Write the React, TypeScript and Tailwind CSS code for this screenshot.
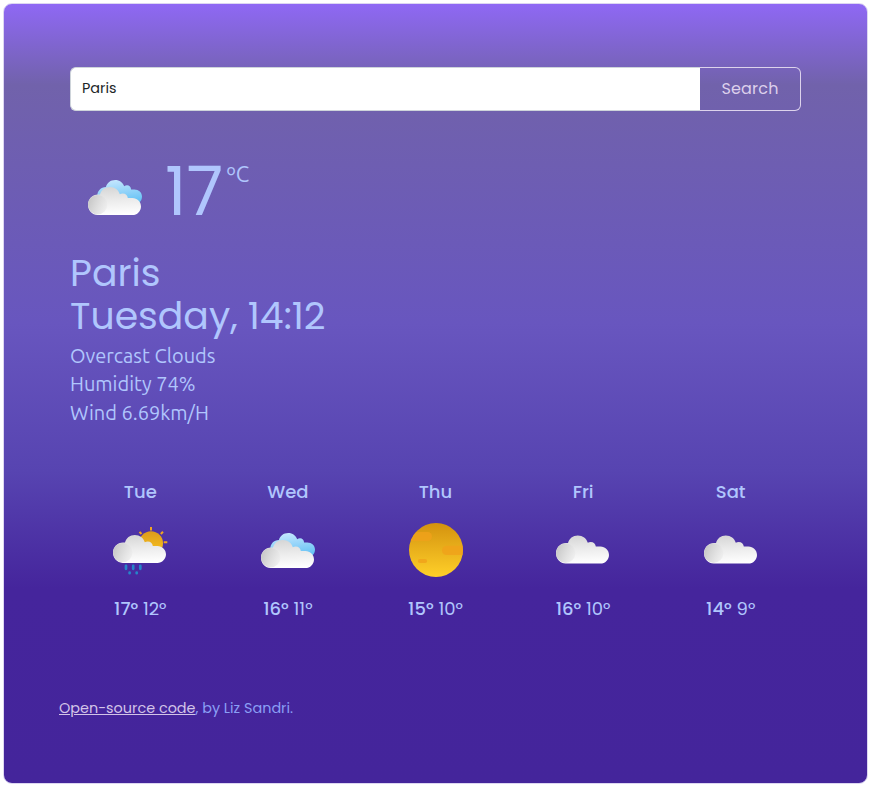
import type { ReactNode } from "react";

const POP = "font-['Poppins','Inter',sans-serif]";
const UBU = "font-['Ubuntu','Noto_Sans',sans-serif]";

function Gradients() {
  return (
    <svg className="absolute size-0" aria-hidden="true">
      <defs>
        <linearGradient id="white" x1="0.4" y1="0" x2="0.5" y2="1">
          <stop offset="0" stopColor="#d6d6d6" />
          <stop offset="0.5" stopColor="#ececec" />
          <stop offset="1" stopColor="#ffffff" />
        </linearGradient>
        <linearGradient id="puff" x1="0" y1="0.3" x2="1" y2="0.65">
          <stop offset="0" stopColor="#c6c6c6" />
          <stop offset="1" stopColor="#ededed" stopOpacity="0.7" />
        </linearGradient>
        <linearGradient id="blue" x1="0" y1="0" x2="0.25" y2="1">
          <stop offset="0" stopColor="#cdeaff" />
          <stop offset="1" stopColor="#68c3f5" />
        </linearGradient>
        <linearGradient id="sun" x1="0" y1="0" x2="0" y2="1">
          <stop offset="0" stopColor="#d4920f" />
          <stop offset="1" stopColor="#ffd029" />
        </linearGradient>
        <linearGradient id="smallSun" x1="0" y1="0" x2="0" y2="1">
          <stop offset="0" stopColor="#dd9b1c" />
          <stop offset="1" stopColor="#fbc81f" />
        </linearGradient>
        <clipPath id="disc">
          <circle cx="27" cy="27" r="27" />
        </clipPath>
      </defs>
    </svg>
  );
}

const CLOUD =
  "M9.700 28.500C4.300 28.500 0 24 0 18.200S4.400 8 10 8L12 8.100C13.100 3.600 17 .5 21.800 .5c5 0 8.700 2.900 10 7.300 .8-.5 1.800-.8 2.900-.8 2.800 0 4.900 1.900 5.100 4.500h4.600c4.800 0 8.600 3.700 8.600 8.400 0 4.800-3.800 8.600-8.600 8.600Z";

function WhiteCloud({ y }: { y: number }) {
  return (
    <g transform={`translate(0 ${y})`}>
      <path d={CLOUD} fill="url(#white)" />
      <circle cx="9.700" cy="18.200" r="9.700" fill="url(#puff)" />
    </g>
  );
}

function Icon({ children }: { children: ReactNode }) {
  return (
    <svg viewBox="0 0 54 54" className="block size-[54px] overflow-visible">
      {children}
    </svg>
  );
}

function Overcast() {
  return (
    <Icon>
      <path
        transform="translate(0 6.300)"
        d="M14 28C10.500 25 9.300 23 9.300 19.500c0-4.800 3.500-8.500 8.600-8.700C19 6.500 22.600 3.700 27.200 3.700c4.400 0 7.700 2.500 9 6.300 .8-.6 1.800-1 2.800-1 2.400 0 4 1.700 4.100 4.100h3.200c4.500 0 7.700 3 7.700 7.200 0 2.600-1 4.600-2.700 6Z"
        fill="url(#blue)"
      />
      <WhiteCloud y={16.500} />
    </Icon>
  );
}

function Cloudy() {
  return (
    <Icon>
      <WhiteCloud y={12} />
    </Icon>
  );
}

function Sunny() {
  return (
    <Icon>
      <g transform="translate(1 0)">
        <circle cx="27" cy="27" r="27" fill="url(#sun)" />
        <g clipPath="url(#disc)" fill="#f0a11a" fillOpacity="0.8">
          <rect x="-6" y="9" width="29" height="9" rx="4.500" />
          <rect x="33" y="22.800" width="28" height="9.200" rx="4.600" />
          <rect x="9" y="36" width="9" height="4" rx="1.800" />
        </g>
      </g>
    </Icon>
  );
}

function Rain() {
  return (
    <Icon>
      <g transform="translate(0 3.800)">
        <circle cx="38" cy="16.500" r="12" fill="url(#smallSun)" />
        <g stroke="#f0a51f" strokeWidth="2">
          <path d="M38 0.300v3.400M26.500 5l2 2.200M50 5l-2.200 2.200M50.700 15.500h3.600" />
        </g>
        <WhiteCloud y={7.600} />
        <g stroke="#2686c9" strokeWidth="2.700" strokeLinecap="round">
          <path d="M13 39v3M20.200 39v3M27.300 39v3M16.600 45.800v.6M23.700 45.800v.6" />
        </g>
      </g>
    </Icon>
  );
}

const DAYS = [
  { day: "Tue", icon: <Rain />, max: "17°", min: "12°" },
  { day: "Wed", icon: <Overcast />, max: "16°", min: "11°" },
  { day: "Thu", icon: <Sunny />, max: "15°", min: "10°" },
  { day: "Fri", icon: <Cloudy />, max: "16°", min: "10°" },
  { day: "Sat", icon: <Cloudy />, max: "14°", min: "9°" },
];

export default function App() {
  return (
    <div className={`h-[786px] bg-white pt-[3px] pl-[3px] text-[#b0c6fd] ${POP}`}>
      <Gradients />
      <main className="h-[781px] w-[865px] rounded-[9px] border border-[#dcd6f2] bg-[linear-gradient(180deg,#8f68f5_0%,#7162ab_10.500%,#6856bf_41%,#5744b1_60%,#45259c_75%,#44259b_100%)] bg-origin-border px-[66px] pt-[63px]">
        <form className="flex h-11 w-[731px]" onSubmit={(e) => e.preventDefault()}>
          <input
            defaultValue="Paris"
            className="w-[630px] rounded-l-[6px] border border-r-0 border-[#ced4da] bg-white pb-px pl-[11px] text-[14.400px] text-[#212529] outline-none"
          />
          <button className="w-[101px] rounded-r-[6px] border border-l-0 border-[#ddd3ec] pb-px text-[16px] tracking-[0.200px] text-[#ddd0ec]">
            Search
          </button>
        </form>

        <section className="mt-[49px] flex h-[80px]">
          <div className="mt-[10px] ml-[18px]">
            <Overcast />
          </div>
          <div className="ml-[23px] text-[67.200px] leading-[63px]">17</div>
          <div className={`ml-[3px] text-[22px] leading-[28px] ${UBU}`}>ºC</div>
        </section>

        <section className="mt-[12px]">
          <h1 className="h-[43px] text-[37.800px] leading-[42px]">Paris</h1>
          <h2 className="h-[43px] text-[37.800px] leading-[42px] whitespace-nowrap">
            Tuesday, 14:12
          </h2>
          <ul className={`mt-[3.600px] text-[20px] leading-[28.500px] ${UBU}`}>
            <li>Overcast Clouds</li>
            <li>Humidity 74%</li>
            <li>Wind 6.69km/H</li>
          </ul>
        </section>

        <section className="-ml-[3.500px] mt-[52px] grid w-[738px] grid-cols-5">
          {DAYS.map(({ day, icon, max, min }) => (
            <div key={day} className="flex flex-col items-center">
              <div className="text-[18px] leading-[26px] font-medium">{day}</div>
              <div className="mt-[18px]">{icon}</div>
              <div className="mt-[19px] text-[18px] leading-[26px]">
                <span className="font-medium">{max}</span> <span>{min}</span>
              </div>
            </div>
          ))}
        </section>

        <footer className="-ml-[11px] mt-[75px] text-[14.400px] leading-[22px] text-[#8a9ff5]">
          <a href="#" className="text-[#d3c4e8] underline">
            Open-source code
          </a>
          , by Liz Sandri.
        </footer>
      </main>
    </div>
  );
}
